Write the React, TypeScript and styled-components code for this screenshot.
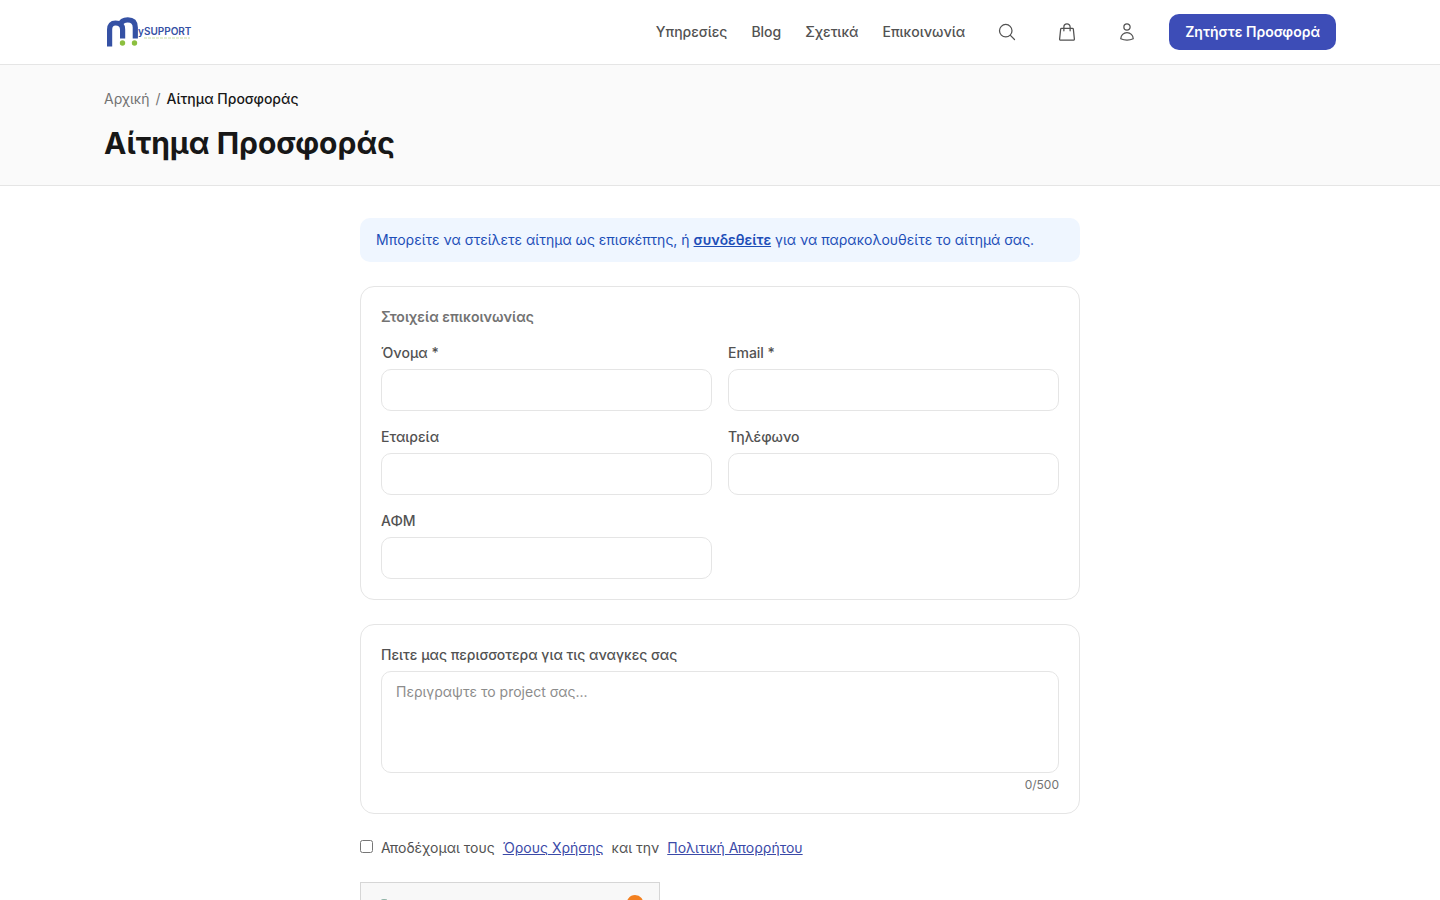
import React, { useState } from "react";
import styled, { createGlobalStyle } from "styled-components";

const GlobalStyle = createGlobalStyle`
  *, *::before, *::after { box-sizing: border-box; }
  body {
    margin: 0;
    background: #ffffff;
    color: #171717;
    font-family: Inter, "Liberation Sans", sans-serif;
    font-size: 14px;
    line-height: 20px;
  }
  h1, h2, p { margin: 0; }
  button, input, textarea { font: inherit; color: inherit; }
`;

const Container = styled.div`
  width: 100%;
  max-width: 1280px;
  margin: 0 auto;
  padding: 0 24px;
`;

const Header = styled.header`
  border-bottom: 1px solid #e5e5e5;
  background: #ffffff;
`;

const HeaderRow = styled(Container)`
  display: flex;
  align-items: center;
  justify-content: space-between;
  height: 64px;
`;

const LogoLink = styled.a`
  display: flex;
`;

const Nav = styled.nav`
  display: flex;
  align-items: center;
  gap: 24px;
`;

const NavLink = styled.a`
  color: #525252;
  font-weight: 500;
  text-decoration: none;
`;

const IconButton = styled.button`
  display: flex;
  padding: 8px;
  border: 0;
  border-radius: 8px;
  background: none;
  color: #525252;
  cursor: pointer;
`;

const QuoteButton = styled.button`
  height: 36px;
  padding: 0 16px;
  border: 0;
  border-radius: 10px;
  background: #3d4db7;
  color: #ffffff;
  font-weight: 600;
  cursor: pointer;
`;

const PageHead = styled.section`
  border-bottom: 1px solid #e5e5e5;
  background: #fafafa;
`;

const PageHeadInner = styled(Container)`
  display: flex;
  flex-direction: column;
  gap: 16px;
  padding-top: 24px;
  padding-bottom: 24px;
`;

const Breadcrumb = styled.nav`
  display: flex;
  gap: 6px;
  color: #737373;

  a {
    color: inherit;
    text-decoration: none;
  }

  [aria-current] {
    color: #171717;
    font-weight: 500;
  }
`;

const Title = styled.h1`
  font-size: 30px;
  line-height: 36px;
  font-weight: 700;
`;

const Main = styled.main`
  width: 100%;
  max-width: 768px;
  margin: 0 auto;
  padding: 32px 24px;
`;

const Form = styled.form`
  display: flex;
  flex-direction: column;
  gap: 24px;
`;

const Notice = styled.p`
  padding: 12px 16px;
  border-radius: 10px;
  background: #eff6ff;
  color: #1d4eb8;

  a {
    color: inherit;
    font-weight: 600;
  }
`;

const Card = styled.section`
  padding: 20px;
  border: 1px solid #e5e5e5;
  border-radius: 14px;
`;

const CardTitle = styled.h2`
  margin-bottom: 16px;
  color: #737373;
  font-size: 14px;
  line-height: 20px;
  font-weight: 600;
`;

const FieldGrid = styled.div`
  display: grid;
  grid-template-columns: 1fr 1fr;
  gap: 16px;
`;

const Field = styled.div`
  display: flex;
  flex-direction: column;
  gap: 6px;
`;

const Label = styled.label`
  color: #525252;
  font-weight: 500;
`;

const Input = styled.input`
  width: 100%;
  height: 42px;
  padding: 10px 14px;
  border: 1px solid #e5e5e5;
  border-radius: 10px;
  background: #ffffff;
`;

const TextArea = styled.textarea`
  display: block;
  width: 100%;
  height: 102px;
  padding: 10px 14px;
  border: 1px solid #e5e5e5;
  border-radius: 10px;
  background: #ffffff;
  resize: none;

  &::placeholder {
    color: #8c8c8c;
    opacity: 1;
  }
`;

const Counter = styled.p`
  margin-top: 4px;
  color: #737373;
  font-size: 12px;
  line-height: 16px;
  text-align: right;
`;

const Consent = styled.div`
  display: flex;
  align-items: flex-start;
  gap: 8px;
  color: #525252;

  input {
    width: 13px;
    height: 13px;
    margin: 2px 0 0;
  }

  a {
    color: #3b4aa8;
  }
`;

const Challenge = styled.div`
  display: flex;
  align-items: center;
  justify-content: space-between;
  width: 300px;
  height: 65px;
  padding: 0 8px;
  border: 1px solid #d6d6d6;
  background: #f8f8f8;
`;

const Logo = () => (
  <svg width="90" height="36" viewBox="0 0 90 36" role="img" aria-label="MySupport">
    <g fill="none" stroke="#3551a4" strokeWidth="5.2">
      <path d="M5.600 32.500V15.500Q5.600 9 11.500 9Q18.600 9 18.600 15.500V24.500" />
      <path d="M15.500 11.500Q17.500 5.800 23.800 5.800Q31.300 5.800 31.300 13.500V24.500" />
    </g>
    <circle cx="18.500" cy="29" r="2.700" fill="#8cbf3f" />
    <circle cx="30.500" cy="29" r="2.700" fill="#8cbf3f" />
    <text x="34" y="21" fontFamily="Inter, sans-serif" fontSize="10" fontWeight="600" fill="#3551a4">
      ySUPPORT
    </text>
    <path d="M40 24H86" stroke="#c9dfa6" strokeWidth="1" strokeDasharray="3 1" />
  </svg>
);

const Icon = ({ d }: { d: string }) => (
  <svg
    width="20"
    height="20"
    viewBox="0 0 24 24"
    fill="none"
    stroke="currentColor"
    strokeWidth="1.5"
    strokeLinecap="round"
    strokeLinejoin="round"
    aria-hidden="true"
  >
    <path d={d} />
  </svg>
);

const NAV = ["Υπηρεσίες", "Blog", "Σχετικά", "Επικοινωνία"];

const ACTIONS = [
  {
    label: "Αναζήτηση",
    d: "m21 21-5.197-5.197m0 0A7.5 7.5 0 1 0 5.196 5.196a7.5 7.5 0 0 0 10.607 10.607Z",
  },
  {
    label: "Καλάθι",
    d: "M15.75 10.5V6a3.75 3.75 0 1 0-7.5 0v4.5m11.356-1.993 1.263 12c.07.665-.45 1.243-1.119 1.243H4.25a1.125 1.125 0 0 1-1.12-1.243l1.264-12A1.125 1.125 0 0 1 5.513 7.5h12.974c.576 0 1.059.435 1.119 1.007Z",
  },
  {
    label: "Λογαριασμός",
    d: "M15.75 6a3.75 3.75 0 1 1-7.5 0 3.75 3.75 0 0 1 7.5 0ZM4.501 20.118a7.5 7.5 0 0 1 14.998 0A17.933 17.933 0 0 1 12 21.75c-2.676 0-5.216-.584-7.499-1.632Z",
  },
];

const FIELDS = [
  { id: "name", label: "Όνομα *", type: "text" },
  { id: "email", label: "Email *", type: "email" },
  { id: "company", label: "Εταιρεία", type: "text" },
  { id: "phone", label: "Τηλέφωνο", type: "tel" },
  { id: "vat", label: "ΑΦΜ", type: "text" },
];

export default function App() {
  const [message, setMessage] = useState("");

  return (
    <>
      <GlobalStyle />
      <Header>
        <HeaderRow>
          <LogoLink href="#">
            <Logo />
          </LogoLink>
          <Nav>
            {NAV.map((item) => (
              <NavLink key={item} href="#">
                {item}
              </NavLink>
            ))}
            {ACTIONS.map((action) => (
              <IconButton key={action.label} type="button" aria-label={action.label}>
                <Icon d={action.d} />
              </IconButton>
            ))}
            <QuoteButton type="button">Ζητήστε Προσφορά</QuoteButton>
          </Nav>
        </HeaderRow>
      </Header>

      <PageHead>
        <PageHeadInner>
          <Breadcrumb aria-label="Breadcrumb">
            <a href="#">Αρχική</a>
            <span>/</span>
            <span aria-current="page">Αίτημα Προσφοράς</span>
          </Breadcrumb>
          <Title>Αίτημα Προσφοράς</Title>
        </PageHeadInner>
      </PageHead>

      <Main>
        <Form>
          <Notice>
            Μπορείτε να στείλετε αίτημα ως επισκέπτης, ή <a href="#">συνδεθείτε</a> για να
            παρακολουθείτε το αίτημά σας.
          </Notice>

          <Card>
            <CardTitle>Στοιχεία επικοινωνίας</CardTitle>
            <FieldGrid>
              {FIELDS.map((field) => (
                <Field key={field.id}>
                  <Label htmlFor={field.id}>{field.label}</Label>
                  <Input id={field.id} type={field.type} />
                </Field>
              ))}
            </FieldGrid>
          </Card>

          <Card>
            <Field>
              <Label htmlFor="message">Πειτε μας περισσοτερα για τις αναγκες σας</Label>
              <TextArea
                id="message"
                maxLength={500}
                placeholder="Περιγραψτε το project σας..."
                value={message}
                onChange={(event) => setMessage(event.target.value)}
              />
            </Field>
            <Counter>{message.length}/500</Counter>
          </Card>

          <Consent>
            <input id="consent" type="checkbox" />
            <label htmlFor="consent">Αποδέχομαι τους</label>
            <a href="#">Όρους Χρήσης</a>
            <span>και την</span>
            <a href="#">Πολιτική Απορρήτου</a>
          </Consent>

          <Challenge>
            <svg width="30" height="34" viewBox="0 0 30 34" aria-hidden="true">
              <circle
                cx="15"
                cy="17"
                r="14"
                fill="none"
                stroke="#8fb3a6"
                strokeWidth="4"
                strokeDasharray="5 6"
                strokeDashoffset="-19.500"
                transform="rotate(180 15 17)"
              />
            </svg>
            <svg width="48" height="42" viewBox="0 0 48 42" aria-hidden="true">
              <path d="M13 22Q14 15 22 14Q24 1 32 1Q40 1 42 13L45 22Z" fill="#f38020" />
            </svg>
          </Challenge>
        </Form>
      </Main>
    </>
  );
}
